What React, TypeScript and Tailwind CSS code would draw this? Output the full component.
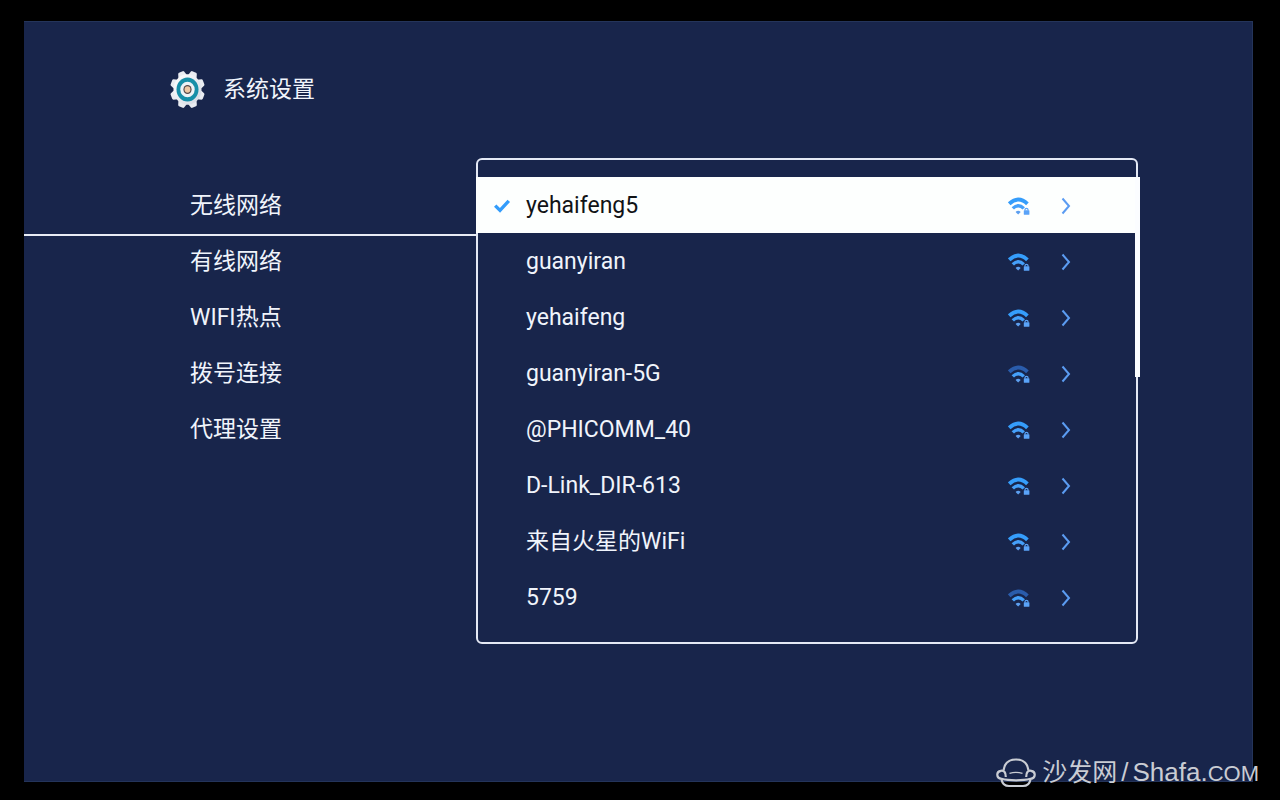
import React from "react";

type Network = { name: string; weak?: boolean; connected?: boolean };

const sections = ["无线网络", "有线网络", "WIFI热点", "拨号连接", "代理设置"];

const networks: Network[] = [
  { name: "yehaifeng5", connected: true },
  { name: "guanyiran" },
  { name: "yehaifeng" },
  { name: "guanyiran-5G", weak: true },
  { name: "@PHICOMM_40" },
  { name: "D-Link_DIR-613" },
  { name: "来自火星的WiFi" },
  { name: "5759", weak: true },
];

const teeth = [0, 45, 90, 135, 180, 225, 270, 315];

function GearIcon() {
  return (
    <svg viewBox="0 0 36 40" className="h-[40px] w-[36px]" aria-hidden="true">
      <defs>
        <linearGradient id="gear" x1="0" y1="0" x2="1" y2="1">
          <stop offset="0" stopColor="#ffffff" />
          <stop offset="1" stopColor="#d3d8e2" />
        </linearGradient>
      </defs>
      <g transform="translate(18.5 19.5) scale(1 1.09)">
        <g fill="#e9ecf1">
          {teeth.map((a) => (
            <path key={a} transform={`rotate(${a + 22.5})`} d="M-4.8 -12 L-3.2 -16.6 Q-2.8 -17.4 -2 -17.4 H2 Q2.8 -17.4 3.2 -16.6 L4.8 -12Z" />
          ))}
        </g>
        <circle r="14" fill="url(#gear)" />
        <circle r="11" fill="#178fa8" />
        <circle r="7.2" fill="#eef3f6" />
        <circle r="4.1" fill="#53494b" />
        <circle r="2.9" fill="#f0c8a4" />
      </g>
    </svg>
  );
}

function WifiLockIcon({ weak }: { weak?: boolean }) {
  return (
    <svg viewBox="0 0 22 18" className="h-[18px] w-[22px]" fill="none" aria-hidden="true">
      <path d="M1.2 6.8 Q10.5 -2 19.4 6.8" stroke={weak ? "#2a5cab" : "#359dfb"} strokeWidth="3.8" />
      <path d="M4.8 11.4 Q10.3 6 15.8 11.4" stroke="#45a0fa" strokeWidth="3.4" />
      <path d="M10.2 17.6 L7.6 15 Q10.2 12.6 12.7 15Z" fill="#5c9ff0" />
      <path d="M17 13.6 V12.6 Q17 11.3 18.5 11.3 Q20 11.3 20 12.6 V13.6" stroke="#5aa3f8" strokeWidth="1.2" />
      <rect x="15.8" y="13.2" width="5.6" height="4.6" rx="0.5" fill="#5aa3f8" />
    </svg>
  );
}

function ChevronIcon() {
  return (
    <svg viewBox="0 0 10 18" className="h-[18px] w-[10px]" fill="none" aria-hidden="true">
      <path d="M1.5 1.5 L8 9 L1.5 16.5" stroke="#5b9cf2" strokeWidth="2" />
    </svg>
  );
}

function CheckIcon() {
  return (
    <svg viewBox="0 0 16 14" className="h-[14px] w-[16px]" fill="none" aria-hidden="true">
      <path d="M1.2 6.6 L6 11.4 L14.8 1.8" stroke="#339cfb" strokeWidth="3.4" />
    </svg>
  );
}

function SofaLogo() {
  return (
    <svg viewBox="0 0 40 30" className="h-[30px] w-[40px]" fill="none" stroke="#c9ccd3" strokeWidth="2.2" strokeLinejoin="round" aria-hidden="true">
      <path d="M7.6 12 C8.5 5.2 13 1.5 20 1.5 S31.5 5.2 32.4 12" />
      <path d="M9.8 19 C9.8 14 7.8 12.2 4.8 12.8 C0 13.7 0 20 5.5 20.8 C13 22.8 27 22.8 34.5 20.8 C40 20 40 13.7 35.2 12.8 C32.2 12.2 30.2 14 30.2 19" />
      <path d="M13.5 15.4 C17 14.4 23 14.4 26.5 15.4" strokeWidth="1.3" />
      <path d="M5.5 21.5 C6.5 26.5 9 28 13 28 H27 C31 28 33.5 26.5 34.5 21.5" />
    </svg>
  );
}

export default function App() {
  return (
    <div className="relative flex min-h-screen bg-black pt-[21px] pr-[27px] pb-[18px] pl-[24px] font-[Roboto,'Noto_Sans_CJK_SC',sans-serif] text-[23px] leading-[30px] text-[#f0f4fb]">
      <div className="flex flex-1 flex-col border border-[#24345a] border-l-0 bg-[#18254b]">
        <header className="flex items-center gap-[18px] pt-[48px] pl-[145px]">
          <GearIcon />
          <h1>系统设置</h1>
        </header>

        <main className="mt-[48px] flex flex-1 items-start">
          <nav className="w-[452px] shrink-0 pt-[20px]">
            {sections.map((name, i) => (
              <button
                key={name}
                type="button"
                className={
                  i === 0
                    ? "block h-[58px] w-full border-b-2 border-[#e8ecf5] pl-[166px] text-left"
                    : "block h-[56px] w-full pb-[4px] pl-[166px] text-left"
                }
              >
                {name}
              </button>
            ))}
          </nav>

          <section aria-label="无线网络" className="relative mr-[114px] flex-1 rounded-[6px] border-2 border-[#e4e9f5] py-[17px]">
            <ul>
              {networks.map((n) => (
                <li key={n.name} className={n.connected ? "-mx-[2px] bg-[#fdfffe] px-[2px] text-[#111316]" : ""}>
                  <button type="button" className="flex h-[56px] w-full items-center pt-[2px] pr-[65px] pl-[16px] text-left">
                    <span className="w-[32px]">{n.connected && <CheckIcon />}</span>
                    <span className="flex-1">{n.name}</span>
                    <WifiLockIcon weak={n.weak} />
                    <span className="ml-[31px]">
                      <ChevronIcon />
                    </span>
                  </button>
                </li>
              ))}
            </ul>
            <div className="absolute top-[17px] -right-[4px] h-[200px] w-[5px] bg-[#fbfdff]" />
          </section>
        </main>
      </div>

      <footer className="absolute right-[21px] bottom-[11px] flex items-center gap-[6px] font-['Liberation_Sans','Noto_Sans_CJK_SC',sans-serif] text-[26px] text-[#c9ccd3]">
        <SofaLogo />
        <span className="flex items-baseline">
          <span className="text-[25px]">沙发网</span>
          <span className="px-[4px]">/</span>
          <span>Shafa.</span>
          <span className="text-[22px]">COM</span>
        </span>
      </footer>
    </div>
  );
}
